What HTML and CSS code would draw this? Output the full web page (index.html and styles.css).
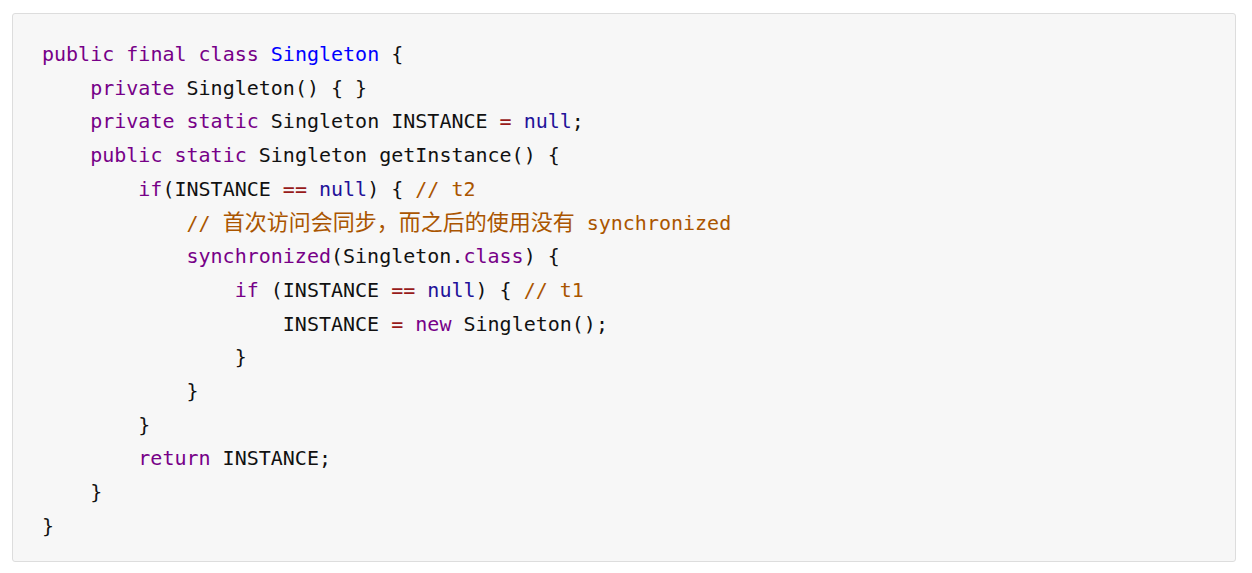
FILE: index.html
```html
<!DOCTYPE html>
<html>
<head>
<meta charset="utf-8">
<link rel="stylesheet" href="styles.css">
</head>
<body>
<div class="code-block"><pre class="code"><span class="kw">public</span> <span class="kw">final</span> <span class="kw">class</span> <span class="def">Singleton</span> {
    <span class="kw">private</span> Singleton() { }
    <span class="kw">private</span> <span class="kw">static</span> Singleton INSTANCE <span class="op">=</span> <span class="atom">null</span>;
    <span class="kw">public</span> <span class="kw">static</span> Singleton getInstance() {
        <span class="kw">if</span>(INSTANCE <span class="op">==</span> <span class="atom">null</span>) { <span class="cm">// t2</span>
            <span class="cm">// <span class="cjk">首次访问会同步，而之后的使用没有</span> synchronized</span>
            <span class="kw">synchronized</span>(Singleton.<span class="kw">class</span>) {
                <span class="kw">if</span> (INSTANCE <span class="op">==</span> <span class="atom">null</span>) { <span class="cm">// t1</span>
                    INSTANCE <span class="op">=</span> <span class="kw">new</span> Singleton();
                }
            }
        }
        <span class="kw">return</span> INSTANCE;
    }
}</pre></div>
</body>
</html>
```
FILE: styles.css
```css
html, body {
  margin: 0;
  padding: 0;
  background: #ffffff;
}
body {
  padding: 13px 0 0 12px;
}
.code-block {
  box-sizing: border-box;
  width: 1224px;
  height: 549px;
  background: #f7f7f7;
  border: 1px solid #dddddd;
  border-radius: 3px;
  padding: 24px 28px 17px 29px;
}
.code {
  margin: 0;
  font-family: "DejaVu Sans Mono", "Noto Sans CJK SC", monospace;
  font-size: 20px;
  line-height: 33.7px;
  color: #111111;
  white-space: pre;
}
.kw { color: #770088; }
.def { color: #0000ff; }
.atom { color: #221199; }
.op { color: #981a1a; }
.cm { color: #aa5500; }
.cjk {
  font-family: "Noto Sans CJK SC", sans-serif;
  font-size: 22px;
  line-height: 20px;
}
```
